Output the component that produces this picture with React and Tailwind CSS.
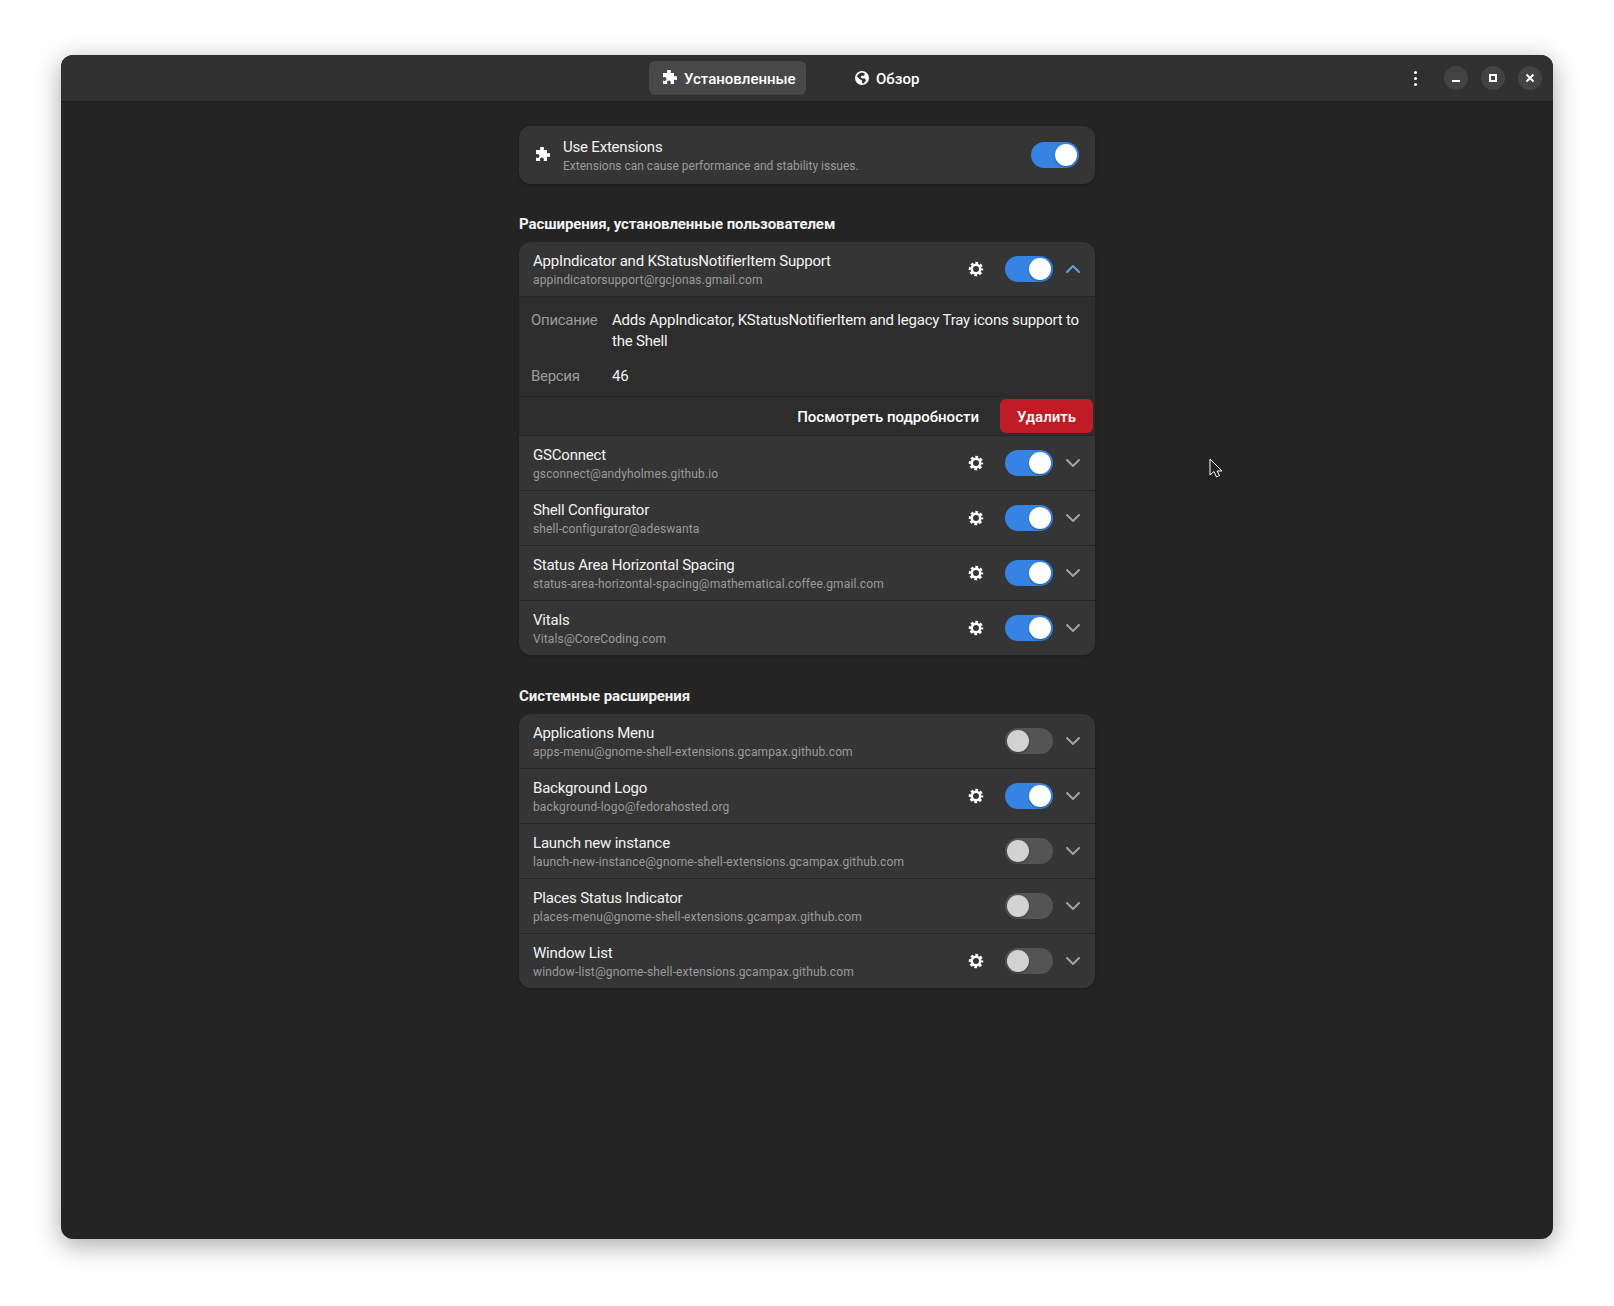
import { ChevronDown, ChevronUp } from 'lucide-react';

const userExtensions = [
  { name: 'GSConnect', id: 'gsconnect@andyholmes.github.io', settings: true, on: true },
  { name: 'Shell Configurator', id: 'shell-configurator@adeswanta', settings: true, on: true },
  { name: 'Status Area Horizontal Spacing', id: 'status-area-horizontal-spacing@mathematical.coffee.gmail.com', settings: true, on: true },
  { name: 'Vitals', id: 'Vitals@CoreCoding.com', settings: true, on: true },
];

const systemExtensions = [
  { name: 'Applications Menu', id: 'apps-menu@gnome-shell-extensions.gcampax.github.com', settings: false, on: false },
  { name: 'Background Logo', id: 'background-logo@fedorahosted.org', settings: true, on: true },
  { name: 'Launch new instance', id: 'launch-new-instance@gnome-shell-extensions.gcampax.github.com', settings: false, on: false },
  { name: 'Places Status Indicator', id: 'places-menu@gnome-shell-extensions.gcampax.github.com', settings: false, on: false },
  { name: 'Window List', id: 'window-list@gnome-shell-extensions.gcampax.github.com', settings: true, on: false },
];

function PuzzleIcon() {
  return (
    <svg width="16" height="16" viewBox="0 0 16 16" fill="#fff">
      <path d="M6 1.500a2 2 0 0 1 4 0c0 .6-.3 1-.4 1.500H13v3.400c.5-.1 1-.4 1.500-.4a2 2 0 0 1 0 4c-.5 0-1-.3-1.500-.4V14H9.500c.1-.5.4-1 .4-1.500a2 2 0 0 0-4 0c0 .5.300 1 .4 1.500H2v-3.500c.5.100 1 .4 1.500.4a2 2 0 0 0 0-4c-.5 0-1 .3-1.500.4V3h4.400C6.300 2.500 6 2.100 6 1.500z" />
    </svg>
  );
}

function GlobeIcon() {
  return (
    <svg width="16" height="16" viewBox="0 0 16 16" fill="#fff">
      <path fillRule="evenodd" d="M8 1a7 7 0 1 0 0 14A7 7 0 0 0 8 1zM6 3l2.500-.5L11 4 9.500 6 8 5.500 6.500 7 8 8.500h3l1 2-2.500 3L8 13V10.500L5.500 9 3 6.500 4 4.500z" />
    </svg>
  );
}

function GearIcon() {
  return (
    <svg width="16" height="16" viewBox="0 0 16 16" fill="none" stroke="#fff">
      <circle cx="8" cy="8" r="4.250" strokeWidth="2.500" />
      <circle cx="8" cy="8" r="6" strokeWidth="2.500" strokeDasharray="2.700 2.012" strokeDashoffset="1.350" />
    </svg>
  );
}

function Toggle({ on }) {
  return (
    <div className={`flex h-[26px] w-[48px] shrink-0 items-center rounded-full p-[2px] ${on ? 'justify-end bg-[#3584e4]' : 'justify-start bg-[#545454]'}`}>
      <div className={`size-[22px] rounded-full shadow-[0_1px_2px_rgba(0,0,0,0.35)] ${on ? 'bg-white' : 'bg-[#d2d2d2]'}`} />
    </div>
  );
}

function ExtensionRow({ ext, open }) {
  return (
    <div className="flex h-[55px] items-center border-b border-[#262626] pl-[14px] pr-[10px] last:h-[54px] last:border-b-0">
      <div className="min-w-0 flex-1">
        <div className="text-[15px] leading-[20px] tracking-[-0.2px] text-[#f2f2f2]">{ext.name}</div>
        <div className="mt-[1px] text-[12px] leading-[16px] tracking-[0.13px] text-[#9b9b9b]">{ext.id}</div>
      </div>
      {ext.settings ? (
        <div className="mr-[21px] flex w-[16px] justify-center">
          <GearIcon />
        </div>
      ) : null}
      <Toggle on={ext.on} />
      <div className="ml-[8px] flex w-[24px] justify-center">
        {open ? (
          <ChevronUp size={24} strokeWidth={2} color="#6d9ddb" />
        ) : (
          <ChevronDown size={24} strokeWidth={2} color="#a3a3a3" />
        )}
      </div>
    </div>
  );
}

function Card({ children }) {
  return (
    <div className="overflow-hidden rounded-[12px] bg-[#353535] shadow-[0_1px_3px_rgba(0,0,0,0.25)]">
      {children}
    </div>
  );
}

export default function App() {
  return (
    <div className="relative h-[1306px] bg-white px-[61px] pb-[67px] pt-[55px] font-['Roboto',sans-serif]">
      <div className="flex h-[1184px] flex-col overflow-hidden rounded-[12px] bg-[#242424] shadow-[0_6px_26px_rgba(0,0,0,0.35)]">
        <header className="relative flex h-[47px] shrink-0 items-center justify-center border-b border-[#1e1e1e] bg-[#303030]">
          <div className="flex items-center gap-[14px]">
            <div className="flex h-[34px] w-[157px] items-center gap-[7px] rounded-[6px] bg-[#484848] pl-[12px] text-[15px] font-medium text-white">
              <PuzzleIcon />
              <span className="pt-[2px]">Установленные</span>
            </div>
            <div className="flex h-[34px] w-[145px] items-center gap-[6px] rounded-[6px] pl-[34px] text-[15px] font-medium text-white">
              <GlobeIcon />
              <span className="pt-[2px]">Обзор</span>
            </div>
          </div>
          <div className="absolute right-[11px] top-[11px] flex items-center">
            <div className="mr-[27px] flex flex-col gap-[3px]">
              <span className="size-[3px] rounded-full bg-white" />
              <span className="size-[3px] rounded-full bg-white" />
              <span className="size-[3px] rounded-full bg-white" />
            </div>
            <div className="flex gap-[13px]">
              <div className="flex size-[24px] items-center justify-center rounded-full bg-[#434343]">
                <span className="mt-[6px] h-[2px] w-[8px] bg-white" />
              </div>
              <div className="flex size-[24px] items-center justify-center rounded-full bg-[#434343]">
                <span className="size-[8px] border-2 border-white" />
              </div>
              <div className="flex size-[24px] items-center justify-center rounded-full bg-[#434343]">
                <svg width="10" height="10" viewBox="0 0 10 10" stroke="#fff" strokeWidth="2" fill="none">
                  <path d="M1.500 1.500l7 7M8.500 1.500l-7 7" />
                </svg>
              </div>
            </div>
          </div>
        </header>

        <main className="mx-auto w-[576px] pt-[24px]">
          <Card>
            <div className="flex h-[58px] items-center pl-[15px] pr-[16px]">
              <PuzzleIcon />
              <div className="ml-[13px] flex-1">
                <div className="text-[15px] leading-[20px] tracking-[-0.2px] text-[#f2f2f2]">Use Extensions</div>
                <div className="mt-[1px] text-[12px] leading-[16px] text-[#9b9b9b]">
                  Extensions can cause performance and stability issues.
                </div>
              </div>
              <Toggle on />
            </div>
          </Card>

          <h2 className="mb-[9px] mt-[31px] text-[15px] font-bold leading-[18px] tracking-[-0.08px] text-[#f2f2f2]">
            Расширения, установленные пользователем
          </h2>
          <Card>
            <ExtensionRow
              open
              ext={{ name: 'AppIndicator and KStatusNotifierItem Support', id: 'appindicatorsupport@rgcjonas.gmail.com', settings: true, on: true }}
            />
            <div className="h-[100px] border-b border-[#262626] bg-[#2d2d2d] px-[12px] pt-[13px] text-[15px] leading-[21px] tracking-[-0.2px]">
              <div className="flex">
                <span className="w-[81px] shrink-0 tracking-[-0.3px] text-[#9b9b9b]">Описание</span>
                <span className="text-[#f2f2f2]">
                  Adds AppIndicator, KStatusNotifierItem and legacy Tray icons support to the Shell
                </span>
              </div>
              <div className="mt-[14px] flex">
                <span className="w-[81px] shrink-0 tracking-[-0.3px] text-[#9b9b9b]">Версия</span>
                <span className="text-[#f2f2f2]">46</span>
              </div>
            </div>
            <div className="flex h-[39px] items-center justify-end border-b border-[#262626] bg-[#2d2d2d] pr-[2px]">
              <span className="mr-[21px] pt-[2px] text-[15px] font-medium text-white">Посмотреть подробности</span>
              <div className="flex h-[34px] w-[93px] items-center justify-center rounded-[6px] bg-[#c01c28] pt-[2px] text-[15px] font-medium text-white">
                Удалить
              </div>
            </div>
            {userExtensions.map((ext) => (
              <ExtensionRow key={ext.id} ext={ext} />
            ))}
          </Card>

          <h2 className="mb-[9px] mt-[32px] text-[15px] font-bold leading-[18px] tracking-[-0.08px] text-[#f2f2f2]">
            Системные расширения
          </h2>
          <Card>
            {systemExtensions.map((ext) => (
              <ExtensionRow key={ext.id} ext={ext} />
            ))}
          </Card>
        </main>
      </div>

      <svg className="absolute left-[1209px] top-[458px]" width="14" height="22" viewBox="0 0 14 22">
        <path d="M1 1v16l4-3.500 2.500 5.500 3-1.500L8 13h5z" fill="#222" stroke="#fff" strokeWidth="1" />
      </svg>
    </div>
  );
}
